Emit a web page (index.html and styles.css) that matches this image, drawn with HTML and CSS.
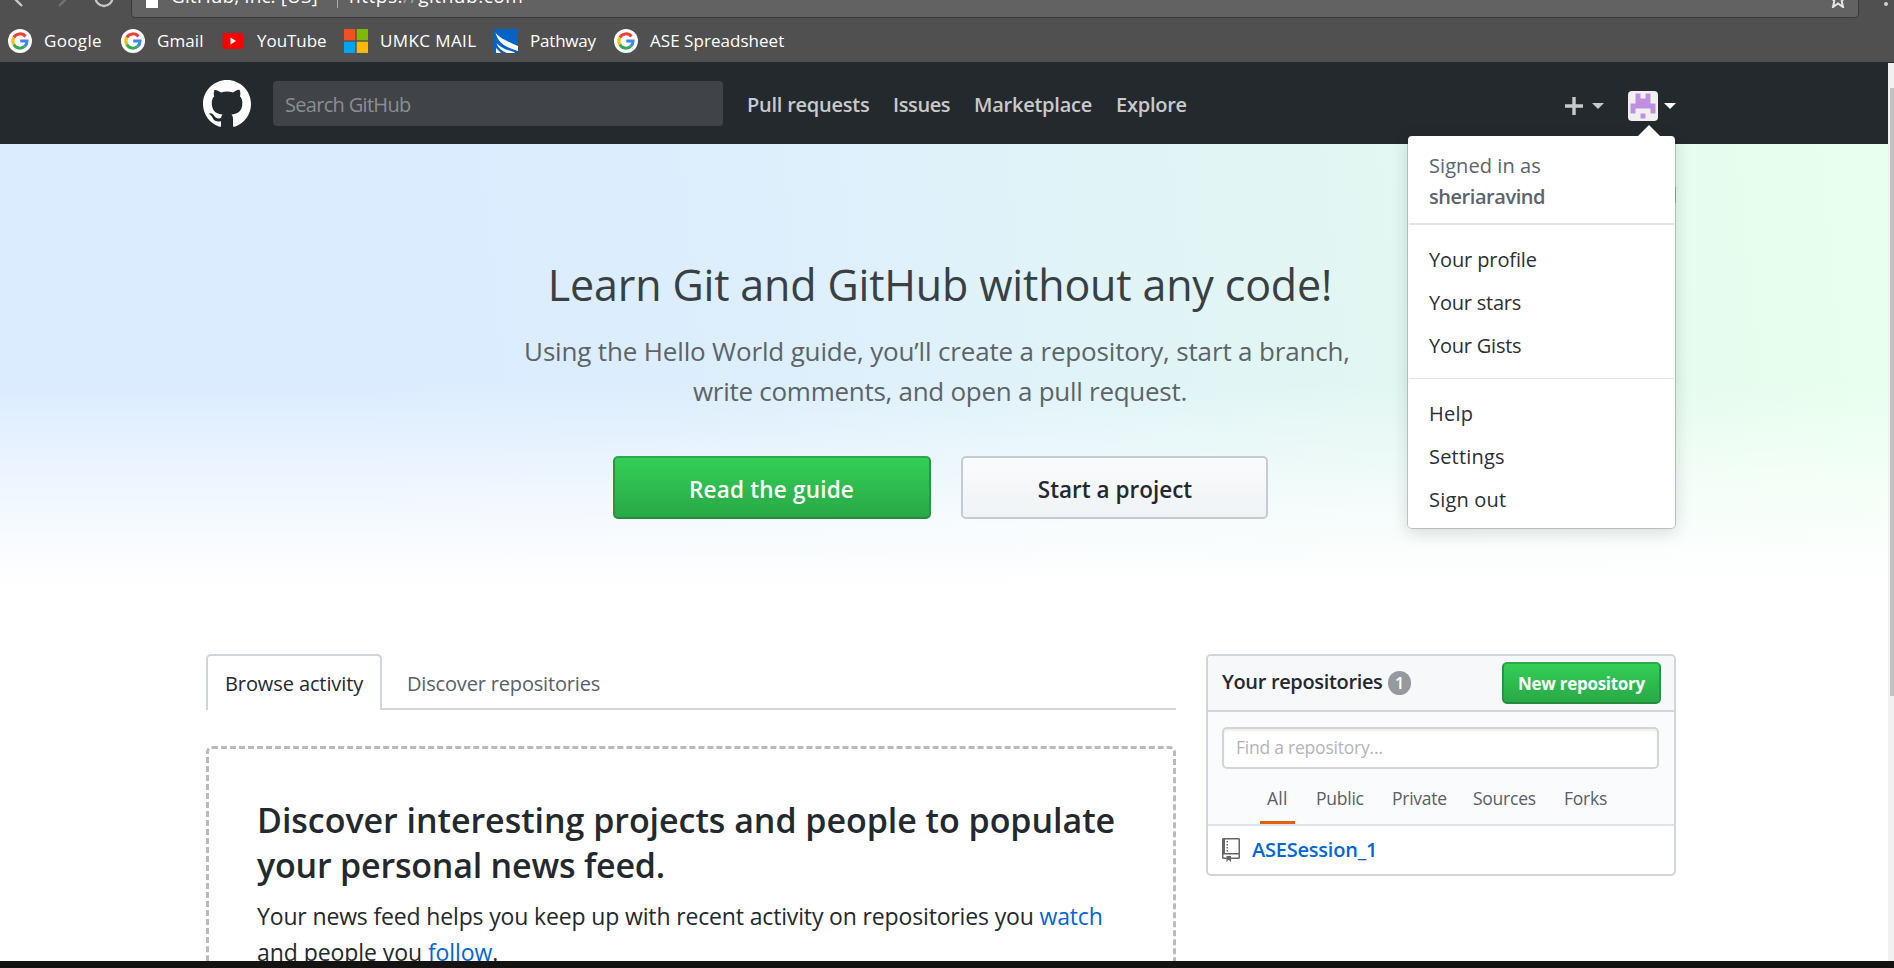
FILE: index.html
```html
<!DOCTYPE html>
<html lang="en">
<head>
<meta charset="utf-8">
<title>GitHub</title>
<link rel="stylesheet" href="styles.css">
</head>
<body>
<svg width="0" height="0" class="defs" aria-hidden="true">
  <symbol id="g-logo" viewBox="0 0 24 24">
    <circle cx="12" cy="12" r="12" fill="#fff"/>
    <path d="M17.500 7.500A7.100 7.100 0 0 0 5.800 8.500" fill="none" stroke="#ea4335" stroke-width="3"/>
    <path d="M5.800 8.500a7.100 7.100 0 0 0 0 7" fill="none" stroke="#fbbc05" stroke-width="3"/>
    <path d="M5.800 15.500a7.100 7.100 0 0 0 10.900 1.900" fill="none" stroke="#34a853" stroke-width="3"/>
    <path d="M12.200 12.100h6.900a7.100 7.100 0 0 1-2.400 5.300" fill="none" stroke="#4285f4" stroke-width="3"/>
  </symbol>
</svg>
<div class="window">
  <div class="chrome">
    <div class="toolbar">
      <svg class="nav-icons" width="131" height="42" viewBox="0 0 131 42" fill="none" stroke-width="2.400">
        <path d="M22 13l-8.500 8.500l8.500 8.500" stroke="#c8c8c8"/>
        <path d="M59 13l8.500 8.500l-8.500 8.500" stroke="#727272"/>
        <circle cx="104" cy="21.500" r="8.500" stroke="#c8c8c8"/>
      </svg>
      <div class="address">
        <svg class="lock" width="12" height="18" viewBox="0 0 12 18"><path d="M0 8h12v10H0z" fill="#fff"/><path d="M2.500 9V5a3.500 3.500 0 0 1 7 0v4" fill="none" stroke="#fff" stroke-width="2"/></svg>
        <span class="site">GitHub, Inc. [US]</span><i class="sep"></i><span class="url">https:<em>//</em>github.com</span>
        <svg class="star" width="16" height="18" viewBox="0 0 16 18"><path d="M8 1l2.200 5.500 5 .500-3.500 4 1.300 6L8 13.500 3 17l1.300-6L.800 7l5-.500z" fill="none" stroke="#e6e6e6" stroke-width="2"/></svg>
      </div>
      <i class="dots"></i>
    </div>
    <div class="bookmarks">
      <a class="bm bm-google"><svg class="bi"><use href="#g-logo"/></svg><span>Google</span></a>
      <a class="bm bm-gmail"><svg class="bi"><use href="#g-logo"/></svg><span>Gmail</span></a>
      <a class="bm bm-youtube"><svg class="bi" viewBox="0 0 24 24"><rect x="1.500" y="4" width="21" height="16" rx="3" fill="#f00"/><path d="M9.500 8.500l5.500 3.500-5.500 3.500z" fill="#fff"/></svg><span>YouTube</span></a>
      <a class="bm bm-mail"><svg class="bi" viewBox="0 0 24 24"><path d="M0 0h11.300v11.300H0z" fill="#f25022"/><path d="M12.700 0H24v11.300H12.700z" fill="#7fba00"/><path d="M0 12.700h11.300V24H0z" fill="#00a4ef"/><path d="M12.700 12.700H24V24H12.700z" fill="#ffb900"/></svg><span>UMKC MAIL</span></a>
      <a class="bm bm-pathway"><svg class="bi" viewBox="0 0 24 24"><path d="M0 0h24v24H0z" fill="#0563c8"/><path d="M1.500 3.500C5 9 13 12 24 17v5C14 19 4 15 1.500 3.500z" fill="#fff"/><path d="M2.500 14C7 19 13 21 20 23l1 1h-8C8 22 4 19 2.500 14z" fill="#fff"/><path d="M2 19l5 5H2z" fill="#fff"/></svg><span>Pathway</span></a>
      <a class="bm bm-sheet"><svg class="bi"><use href="#g-logo"/></svg><span>ASE Spreadsheet</span></a>
    </div>
  </div>
  <div class="view">
    <div class="page">
      <header class="header">
        <svg class="mark" width="48" height="48" viewBox="0 0 16 16"><path fill="#fff" fill-rule="evenodd" d="M8 0C3.580 0 0 3.580 0 8c0 3.540 2.290 6.530 5.470 7.590.4.070.55-.17.55-.38 0-.19-.01-.82-.01-1.490-2.010.37-2.530-.49-2.690-.94-.09-.23-.48-.94-.82-1.130-.28-.15-.68-.52-.01-.53.63-.01 1.080.58 1.230.82.72 1.210 1.870.87 2.330.66.07-.52.28-.87.51-1.070-1.780-.2-3.640-.89-3.640-3.950 0-.87.31-1.590.82-2.150-.08-.2-.36-1.020.08-2.120 0 0 .67-.21 2.200.82.64-.18 1.320-.27 2-.27.68 0 1.360.09 2 .27 1.530-1.040 2.200-.82 2.200-.82.44 1.100.16 1.920.08 2.120.51.56.82 1.270.82 2.150 0 3.070-1.870 3.750-3.650 3.950.29.25.54.73.54 1.480 0 1.070-.01 1.930-.01 2.200 0 .21.15.46.55.38A8.013 8.013 0 0 0 16 8c0-4.420-3.580-8-8-8z"/></svg>
        <div class="search">Search GitHub</div>
        <nav class="nav"><a>Pull requests</a><a class="issues">Issues</a><a>Marketplace</a><a>Explore</a></nav>
        <div class="user">
          <svg width="18" height="18" viewBox="0 0 18 18"><path d="M9 0v18M0 9h18" stroke="#c8c9cb" stroke-width="3.400"/></svg>
          <i class="caret"></i>
          <svg class="avatar" width="30" height="30" viewBox="0 0 30 30"><rect width="30" height="30" rx="4" fill="#f0f0f0"/><path fill="#c08fdf" d="M7.500 2.500h5v5h5v-5h5v10h5v10h-5v-5h-15v5h-5v-10h5zM12.500 22.500h5v5h-5z"/></svg>
          <i class="caret white"></i>
        </div>
      </header>
      <section class="hero">
        <h1>Learn Git and GitHub without any code!</h1>
        <p><span class="lead">Using the Hello World guide, you’ll create a repository, start a branch,</span><br><span class="lead-end">write comments, and open a pull request.</span></p>
        <div class="actions"><a class="btn green big">Read the guide</a><a class="btn big plain">Start a project</a></div>
      </section>
      <main class="main">
        <div class="feed">
          <div class="tabs"><a class="tab on">Browse activity</a><a class="tab">Discover repositories</a></div>
          <div class="blank">
            <h2>Discover interesting projects and people to populate<br><span class="h2-end">your personal news feed.</span></h2>
            <p>Your news feed helps you keep up with recent activity on repositories you <a>watch</a><br><span class="p-end">and people you <a>follow</a>.</span></p>
          </div>
        </div>
        <aside class="repos">
          <div class="repos-head"><b>Your repositories</b><span class="count">1</span><a class="btn green small">New repository</a></div>
          <div class="filter">
            <div class="find">Find a repository…</div>
            <div class="types"><a class="on">All</a><a>Public</a><a>Private</a><a>Sources</a><a>Forks</a></div>
          </div>
          <div class="repo"><svg width="18" height="24" viewBox="0 0 12 16"><path fill="#666" fill-rule="evenodd" d="M4 9H3V8h1v1zm0-3H3v1h1V6zm0-2H3v1h1V4zm0-2H3v1h1V2zm8-1v12c0 .55-.45 1-1 1H6v2l-1.500-1.500L3 16v-2H1c-.55 0-1-.45-1-1V1c0-.55.45-1 1-1h10c.55 0 1 .45 1 1zm-1 10H1v2h2v-1h3v1h5v-2zm0-10H2v9h9V1z"/></svg><a>ASESession_1</a></div>
        </aside>
      </main>
      <i class="dismiss"></i>
      <div class="menu">
        <div class="who">Signed in as<br><b>sheriaravind</b></div>
        <div class="group first"><a class="profile">Your profile</a><a>Your stars</a><a>Your Gists</a></div>
        <div class="group loose"><a>Help</a><a>Settings</a><a>Sign out</a></div>
      </div>
    </div>
    <div class="scroll"><i></i></div>
  </div>
  <div class="bezel"></div>
</div>
</body>
</html>
```
FILE: styles.css
```css
* { box-sizing: border-box; }
body { margin: 0; font-family: "Open Sans", "Noto Sans", sans-serif; color: #24292e; background: #fff; }
a { color: inherit; text-decoration: none; }
i { display: block; }
span, a, b, h1, h2, p { white-space: nowrap; }
.defs { position: absolute; }
.window { width: 1894px; height: 968px; overflow: hidden; display: flex; flex-direction: column; }

/* Browser toolbar and bookmarks */
.chrome { height: 62px; flex: none; background: #505050; overflow: hidden; color: #fff; }
.toolbar { display: flex; height: 42px; margin-top: -24px; }
.nav-icons { flex: none; }
.address { width: 1728px; height: 42px; border: 1px solid #393939; border-radius: 4px; background: #626262; display: flex; align-items: center; padding-left: 14px; font-size: 19px; line-height: 28px; }
.lock { margin: 3px 13px 0 0; flex: none; }
.site, .url { width: 150px; padding-bottom: 3px; letter-spacing: .09px; }
.url { width: auto; letter-spacing: .54px; }
.sep { width: 1px; height: 22px; background: #aaa; margin: 0 11px 0 16px; }
.url em { font-style: normal; color: #a5a5a5; }
.star { margin-left: auto; margin-right: 12px; margin-top: 3px; }
.dots { width: 4px; height: 4px; border-radius: 50%; background: #d0d0d0; margin: 26px 0 0 25px; }
.bookmarks { height: 44px; padding: 2px 0 0 8px; display: grid; grid-template-columns: 113px 100px 123px 150px 120px auto; align-items: center; font-size: 17px; line-height: 24px; }
.bm { display: flex; gap: 12px; align-items: center; }
.bm span { padding-bottom: 1px; }
.bi { width: 24px; height: 24px; flex: none; }
.bm-google { letter-spacing: .35px; }
.bm-gmail { letter-spacing: .1px; }
.bm-youtube { letter-spacing: -.05px; }
.bm-mail { letter-spacing: .4px; }
.bm-pathway { letter-spacing: -.2px; }
.bm-sheet { letter-spacing: .04px; }

.view { height: 899px; display: flex; flex: none; }
.page { width: 1888px; height: 899px; overflow: hidden; position: relative; }
.scroll { width: 6px; background: #f1f1f1; border-top: 1px solid #24292e; padding: 25px 0 0 2px; }
.scroll i { height: 608px; background: #c1c1c1; }
.bezel { height: 7px; background: #151212; }

/* Site header */
.header { height: 82px; background: #24292e; display: flex; align-items: center; padding: 0 212px 0 203px; }
.mark { margin: 2px 22px 0 0; flex: none; }
.search { width: 450px; height: 45px; border-radius: 4px; background: #404448; color: #8b8e91; font-size: 20px; line-height: 47px; padding-left: 12px; flex: none; letter-spacing: -.69px; }
.nav { display: grid; grid-template-columns: 146px 81px 142px auto; margin-left: 24px; font-size: 20px; font-weight: 600; line-height: 28px; color: #c8c9cb; padding-top: 3px; letter-spacing: -.24px; }
.nav .issues { letter-spacing: -.4px; }
.user { margin-left: auto; display: flex; align-items: center; padding-top: 5px; }
.caret { border: 6px solid transparent; border-top-color: #c8c9cb; border-bottom: 0; margin-left: 9px; }
.avatar { margin-left: 24px; }
.caret.white { border-top-color: #fff; margin-left: 6px; }

/* Intro banner */
.hero { height: 444px; background: linear-gradient(to bottom, rgba(255,255,255,0) 54%, rgba(255,255,255,.7) 84%, #fff 100%), linear-gradient(84deg, #dbecff 20%, #dcedfd 36%, #e0f3f9 55%, #e1f6f3 69%, #e6fcef 88%, #e8ffee 98%); text-align: center; padding: 110px 8px 0 0; }
.hero h1 { margin: 0; font-size: 43px; font-weight: 400; line-height: 62px; color: #3a3f43; letter-spacing: -.17px; }
.hero p { margin: 15px 0 0; font-size: 26px; line-height: 40px; color: #5c6469; }
.lead { letter-spacing: -.16px; margin-right: 6px; }
.lead-end { letter-spacing: -.27px; }
.actions { display: flex; justify-content: center; gap: 30px; margin-top: 45px; }
.btn { display: flex; justify-content: center; align-items: center; border: 2px solid #c6cbd1; border-radius: 5px; background: linear-gradient(#fafbfc, #eff3f6) border-box; font-weight: 600; }
.btn.green { border-color: #2cab4b #29963f #238b3c; background: linear-gradient(#34d058, #28a745) border-box; color: #fff; }
.big { width: 318px; height: 63px; font-size: 22.500px; padding-top: 3px; letter-spacing: .2px; }
.plain { width: 307px; letter-spacing: 0; padding-left: 2px; }

/* Activity feed */
.main { display: flex; padding: 66px 0 0 206px; gap: 30px; align-items: flex-start; }
.feed { width: 970px; flex: none; }
.tabs { display: flex; height: 56px; border-bottom: 2px solid #d1d5da; font-size: 20px; line-height: 28px; color: #586069; letter-spacing: -.17px; }
.tab { height: 56px; padding: 16px 0 0 25px; }
.tab.on { width: 176px; padding: 14px 0 0 17px; border: 2px solid #d1d5da; border-bottom: 0; border-radius: 5px 5px 0 0; background: #fff; color: #24292e; letter-spacing: -.1px; }
.blank { margin-top: 36px; height: 300px; border: 3px dashed #bbb; border-radius: 6px; padding: 49px 0 0 48px; }
.blank h2 { margin: 0; font-size: 34px; font-weight: 600; line-height: 45px; letter-spacing: -.04px; }
.h2-end { letter-spacing: -.2px; }
.blank p { margin: 10px 0 0; font-size: 23px; line-height: 36px; letter-spacing: -.15px; }
.p-end { letter-spacing: -.07px; }
.blank a, .repo a { color: #0366d6; }

/* Repository list */
.repos { width: 470px; height: 222px; border: 2px solid #d1d5da; border-radius: 5px; overflow: hidden; }
.repos-head { height: 56px; background: #f6f8fa; border-bottom: 2px solid #d1d5da; display: flex; align-items: center; padding: 0 13px 0 14px; font-size: 20px; }
.repos-head b { font-weight: 600; width: 166px; padding-bottom: 3px; letter-spacing: -.34px; }
.count { width: 23px; height: 24px; border-radius: 12px; background: #959a9f; color: #fff; font-size: 17px; font-weight: 600; line-height: 24px; text-align: center; }
.small { width: 159px; height: 42px; margin-left: auto; font-size: 17px; font-weight: 700; letter-spacing: -.28px; }
.filter { height: 114px; background: #fafbfc; border-bottom: 2px solid #e1e4e8; padding: 15px 15px 0 14px; }
.find { height: 42px; border: 2px solid #d1d5da; border-radius: 5px; background: #fff; box-shadow: inset 0 2px 2px rgba(27,31,35,.07); padding-left: 12px; font-size: 17.500px; line-height: 37px; color: #b0b5ba; letter-spacing: -.23px; }
.types { display: grid; grid-template-columns: 49px 76px 81px 91px auto; margin: 14px 0 0 38px; height: 41px; font-size: 17.500px; line-height: 30px; color: #586069; letter-spacing: -.25px; }
.types a { padding-left: 7px; }
.types a.on { width: 35px; border-bottom: 3px solid #e36209; letter-spacing: .2px; }
.repo { display: flex; align-items: center; gap: 12px; padding: 10px 14px; height: 48px; font-size: 20px; font-weight: 600; line-height: 24px; letter-spacing: -.22px; }

/* Account menu */
.dismiss { position: absolute; left: 1674px; top: 125px; width: 2px; height: 16px; background: #b4c4bd; }
.menu { position: absolute; left: 1407px; top: 73px; width: 269px; height: 394px; background: #fff; background-clip: padding-box; border: 1px solid rgba(27,31,35,.2); border-top-color: transparent; border-radius: 5px; box-shadow: 0 4px 16px rgba(27,31,35,.15); font-size: 20px; line-height: 31px; color: #2b3036; letter-spacing: -.22px; }
.menu::before { content: ""; position: absolute; left: 230px; top: -11px; border: 11px solid transparent; border-top: 0; border-bottom-color: #fff; }
.who { margin: 0 1px; height: 89px; border-bottom: 2px solid #e1e4e8; padding: 14px 0 0 20px; color: #5c646d; letter-spacing: .08px; }
.who b { font-weight: 600; letter-spacing: -.45px; }
.group { margin: 0 1px; padding: 13px 0 0 20px; line-height: 43px; border-top: 1px solid #e1e4e8; }
.group a { display: block; height: 43px; }
.group.first { border: 0; height: 153px; }
.profile { letter-spacing: -.12px; }
.loose { letter-spacing: .2px; }
```
